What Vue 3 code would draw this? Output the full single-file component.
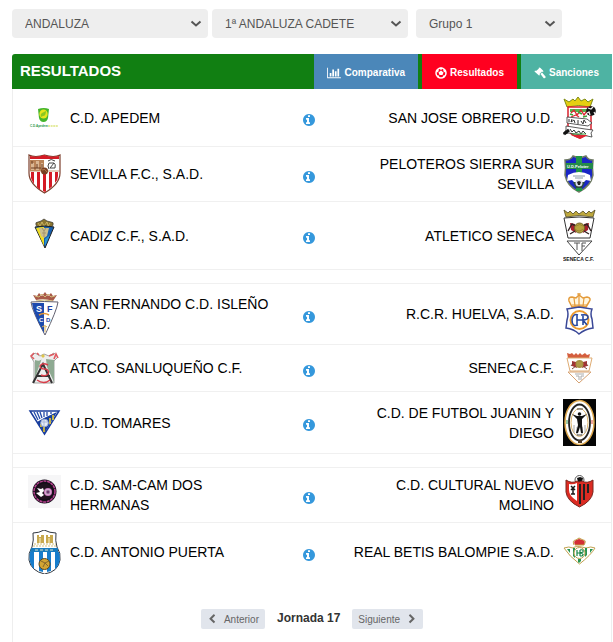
<script setup>
import { ref } from 'vue'

const region = ref('ANDALUZA')
const category = ref('1ª ANDALUZA CADETE')
const group = ref('Grupo 1')

// Club crests, drawn on a 33-unit wide canvas.
const crests = {
  apedem: `
    <path d="M10 13q6-2 11 0l-1 9q-1 4-4.5 4t-4.5-4z" fill="#43b52c"/>
    <ellipse cx="15.5" cy="18" rx="4.2" ry="4.5" fill="#e6e51c"/>
    <path d="M13 21q-1-3 1-4l4-2q0 5-3 5z" fill="#8cc820"/>
    <text x="2" y="31" font-size="3" fill="#259746">C.D.Apedem</text>
    <path d="M20 30h10" stroke="#dce580" stroke-width="1.5" stroke-dasharray="2 .6"/>`,
  obrero: `
    <path d="M4 11L1 3l5 3 4-3 2 2 3-4 3 4 4-2 3 3 5-3-3 8q-11-3-23 0z" fill="#e6cf12" stroke="#7d8b18"/>
    <path d="M5 11h23v23q-2 4-11 8Q6 38 5 34z" fill="#fff" stroke="#d9202c" stroke-width="1.5"/>
    <path d="M7 13h19v3H7z" fill="#53b24c"/>
    <path d="M8 17l3-3 3 5 4-5 3 5 3-4M8 21l5-2 3 2" stroke="#df2835" fill="none" stroke-width="1.3"/>
    <path d="M7 18l3 1m5-3l4 2m1 3l4-1" stroke="#39a33a" stroke-width="1.5"/>
    <path d="M4 21l20 2 5 4-4 3L4 27z" fill="#fff" stroke="#333" stroke-width=".8"/>
    <path d="M6 23v3m3-3l-1 3 3-2 1 3m3-3v4m3-3l2 3 1-4 2 3" stroke="#333" fill="none"/>
    <path d="M3 30l19 3 8 1-2 3 1 4-5-1-18-3-6 1 3-4z" fill="#fff" stroke="#333" stroke-width=".8"/>
    <path d="M7 33l2 3 2-2 2 3 3-2 2 3 2-3 3 3" stroke="#333" fill="none"/>
    <path d="M8 39h17l-8 4z" fill="#df2532"/><path d="M9 38h14" stroke="#3b9a38"/>
    <circle cx="28" cy="15" r="4.8" fill="#111"/>
    <path d="M25 12l3 1 2-2M24 17l2-1 1 3M31 16l1 2" stroke="#eee" fill="none" stroke-width="1.3"/>
    <path d="M1 38l5-4" stroke="#111" stroke-width="3"/>`,
  sevilla: `
    <path d="M1 1q6 3 15.500 0Q26 4 32 1v18q0 11-15.500 20Q1 30 1 19z" fill="#fff" stroke="#7c3f2c" stroke-width="1.2"/>
    <path d="M2 2q7 2 14-1 7 3 15 1v3H2z" fill="#d41b25"/>
    <path d="M2 6h14v11H2z" fill="#b98357"/>
    <path d="M3 9h3v7H3zm5-2h3v9H8zm5 2h2v7h-2z" fill="#dbb792"/>
    <path d="M4 7v3m5 0v4m5-4v5M3 14h10" stroke="#6b3c22"/>
    <path d="M20 7q3-3 7 0m-6 2h5l-4 5h5q1-4-1-5m-5 0q-2 3 0 6" stroke="#444" fill="none"/>
    <path d="M2 17h29" stroke="#c49a72"/>
    <path d="M3 18v6q1 3 3 6V18zm6 0v15q2 2 3 2.500V18zm6 2v17l2 1 1-.6V20zm6-2v17l3-2.500V18zm6 0v11q3-3 3-7v-4z" fill="#d41b25"/>
    <circle cx="16.5" cy="17" r="3.5" fill="#784024"/><path d="M14 16q3-2 5 2" stroke="#c08a5b" fill="none" stroke-width=".8"/>`,
  peloteros: `
    <path d="M2 6q6 0 8-4 6 3 13 0 2 4 7 4-1 8 0 15-2 11-14 17Q4 32 2 21q1-7 0-15z" fill="#1926c5" stroke="#6f7b64" stroke-width="1.5"/>
    <path d="M13 2h6v35h-6z" fill="#219647"/><path d="M3 9h27v6H3z" fill="#248a4a"/>
    <text x="4" y="14" font-size="4" fill="#fff">U.D.Peloter</text>
    <path d="M5 21q11-6 22 0l1 6-5-1-2 2H11l-2-2-5 1z" fill="#fff"/>
    <path d="M10 22h12M12 24h8" stroke="#8698a6"/>
    <path d="M10 28h12l-3 6h-6z" fill="#2f4c3e"/>
    <circle cx="16" cy="29" r="3.5" fill="#dde"/>
    <path d="M14 28l2-1 2 1-1 3h-2z" fill="#222"/>`,
  cadiz: `
    <path d="M8 16q-1-3 2-3l3-1 3-2 3 2 4 1q3 0 2 3l-2 3H10z" fill="#8a7430" stroke="#3a3a35" stroke-width=".7"/>
    <path d="M10 14l2 3 2-4 2 4 3-4 1 4 2-3" stroke="#e3cf78" fill="none" stroke-width=".7"/>
    <path d="M7 18q10-2 19 0l-9 21z" fill="#165fae" stroke="#222"/>
    <path d="M8 19l8 18V18q-4 0-8 1z" fill="#f3df20"/>
    <path d="M11 19h10l-2 8-3 2-3-2z" fill="#ccc08d"/>
    <path d="M14 19l2 3 2-3m-4 5h4m-2-2v6" stroke="#a39470" fill="none"/>
    <path d="M17 30v7l5-11z" fill="#2995d2"/>`,
  atseneca: `
    <path d="M3 8L1 1l4 3 2-2 3 3 3-3 3 3 4-3 3 3 3-3 2 2 4-3-2 7Q16 5 3 8z" fill="#bea83d" stroke="#504921" stroke-width=".8"/>
    <path d="M1 9q15-2 30 0l-4 20H5z" fill="#fff" stroke="#333"/>
    <path d="M7 14l5 1 1 9-5-3zM26 14l-5 1-1 9 5-3z" fill="#a8202d"/>
    <path d="M5 22l4-7 4 2M28 22l-4-7-4 2M7 25l5-3M26 25l-5-3" stroke="#332223" stroke-width="1.4" fill="none"/>
    <circle cx="16.5" cy="19" r="5" fill="#b8a43d" stroke="#75662c"/>
    <path d="M13 17q4-3 7 0m-8 3q4 4 8 0" stroke="#8a782f" fill="none" stroke-width=".7"/>
    <path d="M4 32h25L16 46z" fill="#fff" stroke="#444"/>
    <path d="M11 34h6m-3 0v7m9-7h-4v8m0-5h3" stroke="#555" fill="none"/>
    <text x="0" y="52" font-size="5" fill="#111">SENECA C.F.</text>`,
  sanfernando: `
    <path d="M8 9L5 4l4 1 2-3 3 3 3-4 3 4 3-3 2 3 4-1-4 6q-8-3-17-1z" fill="#a85a48"/>
    <path d="M7 5l4 1 3-3 3 3 3-3 3 3 4-1M8 10q8-2 17 0" stroke="#d0bb79" fill="none"/>
    <path d="M3 11q13-1 27 0-1 8-13 33Q4 20 3 11z" fill="#fff" stroke="#626170"/>
    <path d="M4 12h12v30Q5 22 4 12z" fill="#1d4aae"/>
    <text x="8" y="21" font-size="9" fill="#fff">S</text><text x="19" y="21" font-size="9" fill="#1d3fa4">F</text>
    <path d="M11 24q5-3 10 0" stroke="#e59534" fill="none" stroke-width="1.5"/>
    <text x="11" y="31" font-size="6" fill="#fff">C</text><text x="18" y="31" font-size="6" fill="#1d3fa4">D</text>
    <path d="M14 36q3-3 5 0m-2-1v6" stroke="#d8aa54" fill="none"/>`,
  huelva: `
    <path d="M9 16L6 10q-1-4 3-4l4 1 3-3 4 3 4-1q5 1 2 5l-3 5q-7-2-14 0z" fill="#fff6df" stroke="#e49b3b" stroke-width="1.5"/>
    <path d="M16 2v13m-2-12h4M11 7l1 8m9-8l-1 8M9 14h15" stroke="#e49b3b" stroke-width="1.200"/>
    <path d="M4 18l12-2 13 2q-2 5 0 10l1 9q-8 1-14 6-5-5-13-6l1-8q2-6 0-11z" fill="#fff" stroke="#394797" stroke-width="1.5"/>
    <circle cx="16.5" cy="29" r="9" fill="#fff" stroke="#ed9b2e" stroke-width="2"/>
    <path d="M15 24q-5-2-6 5 0 7 6 5M14 24v10m0-5h6m0-5v10m-2-10q7-1 7 2t-5 3l4 5" stroke="#2949a0" fill="none" stroke-width="1.6"/>`,
  sanluqueno: `
    <path d="M3 5l4-4 5 3 4-2 5 2 5-3 4 4-4 4v22H6V10z" fill="#eee" stroke="#a2a4a1"/>
    <path d="M7 8q6 2 7-2L7 26zM18 7l8 1v22l-7-15z" fill="#8eaa92"/>
    <path d="M6 1L3 4l3 3m3-6l2 2m10 1l5-2m0 5l2-5 2 4" stroke="#e05a61" fill="none" stroke-width="1.6"/>
    <path d="M13 4l2-2 2 2-2 2z" fill="#ddc54d"/>
    <path d="M5 31l10-19 9 19M9 24h13" stroke="#333" fill="none" stroke-width="2"/>
    <path d="M20 13q-6-3-8 1 0 3 5 3 5 1 3 5-3 3-7 1M9 28q7 5 13 0" stroke="#d83d49" fill="none" stroke-width="1.4"/>`,
  seneca: `
    <path d="M5 6L4 1l3 1 2-1 2 2 2-2 2 2 2-2 2 2 3-2 2 2 3-1-1 4z" fill="#d45e3e"/>
    <path d="M4 6h25l-3 13H7z" fill="#fff" stroke="#dfac73"/>
    <path d="M9 9l4 1 1 6-5-2zm15 0l-4 1-1 6 5-2z" fill="#a83034"/>
    <path d="M8 14l3-4m14 4l-3-4M9 17l4-3m11 3l-4-3" stroke="#7b4a3c"/>
    <circle cx="16.5" cy="12" r="4" fill="#a69243"/><path d="M14 11h5m-5 2h5" stroke="#c5ae55" stroke-width=".6"/>
    <path d="M5 20h23L16 31z" fill="#fff" stroke="#d6a171"/>
    <path d="M12 22h9M13 24h3v4m5-4h-3v4" stroke="#aaa" fill="none"/>`,
  tomares: `
    <path d="M2 12h29L16.500 35z" fill="#fff" stroke="#193c9c" stroke-width="1.5"/>
    <path d="M9 23l7-4 13-6-12.500 21z" fill="#173f9f"/>
    <path d="M13 25v3m3-3v8m6-14v6m3-9v5" stroke="#edce30" stroke-width="1.6"/>
    <path d="M6 13l4 8m-1-8l3 7m0-7l2 6m2-6v5m3-5v4m4-4v2" stroke="#244ba9" fill="none" stroke-width="1.3"/>
    <circle cx="16.5" cy="24" r="3.8" fill="#e8eef6" stroke="#8fa2cd"/><path d="M14 23h5m-3-2v6" stroke="#a8b7da"/>`,
  juanin: `
    <path d="M0 0h33v47H0z" fill="#050505"/>
    <ellipse cx="16.5" cy="23.5" rx="14.500" ry="22" fill="#fff" stroke="#dfa84c" stroke-width="1.5"/>
    <ellipse cx="16.5" cy="23.5" rx="10.500" ry="18" fill="#fff" stroke="#222" stroke-width="1.8"/>
    <ellipse cx="16.5" cy="23.5" rx="8.500" ry="14" fill="#fff" stroke="#ddb56b"/>
    <path d="M11 26v8m3-6v8m5-8v8m3-10v8" stroke="#aaa"/>
    <path d="M9 15l5 2h5l5-2-5 5v6l1 8h-2l-1-6-2 6h-2l2-8-1-6z" fill="#111"/><circle cx="16.5" cy="15" r="1.800" fill="#111"/>
    <path d="M14 10h6M14 36h5" stroke="#444"/><path d="M15 41h4v3h-4z" fill="#4b3827"/>
    <path d="M3 22h2m-2 2h2" stroke="#379954"/><path d="M28 22h2m-2 2h2" stroke="#dd453c"/>`,
  samcam: `
    <path d="M0 0h33v33H0z" fill="#f6f6f7"/><circle cx="16.5" cy="16.5" r="12" fill="#150e19"/>
    <circle cx="16.5" cy="16.5" r="10.5" fill="none" stroke="#b5418f" stroke-width="1.5" stroke-dasharray="3 .7"/>
    <circle cx="16.5" cy="16.5" r="8" fill="#20121f"/>
    <path d="M9 13l4 1 2-1 1 3-2 2 2 2-3 2-5-4 4-1z" fill="#fff"/>
    <circle cx="20" cy="17" r="4" fill="#c87bbd"/><path d="M18 15h4v4h-4z" fill="#6d3970" stroke="#fff" stroke-width=".6"/>`,
  molino: `
    <circle cx="16.5" cy="5" r="4.500" fill="#fff" stroke="#555"/><path d="M14 3l3-1 3 1-1 4h-4z" fill="#111"/>
    <path d="M3 5q6 4 11 1l2 1 3-1q5 3 11-1v12q-1 9-13.500 15Q4 26 3 17z" fill="#dc2b22" stroke="#78261e"/>
    <path d="M6 9q4 1 8-1v18Q6 21 6 15z" fill="#fff"/>
    <path d="M8 11l4 4m0-4l-4 4m2-1v5m-2 0h4" stroke="#191919" fill="none" stroke-width="1.5"/>
    <path d="M17 9v20M21 9v16M25 9v9" stroke="#222" stroke-width="2"/>`,
  puerta: `
    <path d="M5 3q6 0 11-3 6 3 12 3-1 8 1 14 4 6 3 13-2 12-15.500 14Q3 41 1 30q-1-7 3-13Q6 10 5 3z" fill="#fff" stroke="#333942"/>
    <path d="M9 5h2v2h2V5h3v8H9zM18 5h2v2h2V5h3v8h-7z" fill="#c8a94f"/><path d="M12 8v5m9-5v5" stroke="#fff6ca"/>
    <path d="M6 14h22M5 16h23" stroke="#d3bf7d" stroke-dasharray="2 1"/>
    <path d="M3 18h27v4H2z" fill="#187bbd"/><path d="M7 20h20" stroke="#d9e4cc" stroke-dasharray="3 2"/>
    <path d="M2 22h4v17q-6-6-4-17zm9 0h4v20l-4-1zm8 0h4v19l-4 1zm8 0h4q3 11-4 17z" fill="#177dcc"/>
    <circle cx="16.5" cy="34" r="5.500" fill="#d3a533" stroke="#5d4821"/>
    <path d="M13 31l4 2 4-2m-4 2l-2 4m2-4l3 3" stroke="#7c6029" fill="none" stroke-width=".9"/>`,
  betis: `
    <path d="M12 15q-2-4 1-5l3-1 4 1q3 1 1 5z" fill="#d32e35"/>
    <path d="M11 15q-2-5 2-5l3-2 4 2q4 0 1 5H12" stroke="#c09b40" fill="none"/>
    <path d="M1 18q5-2 9 0 3-3 13 0 5-2 9 0-4 7-15.500 16Q6 26 1 18z" fill="#fff" stroke="#c2a250"/>
    <path d="M4 19l3 4v-4zm6-1v8l2 2V18zm5 11v3l1 1 2-2v-2zm7-11v9l2-2v-7zm5 1v4l3-4z" fill="#259451"/>
    <circle cx="16.5" cy="23" r="5.500" fill="#fff" stroke="#ba9f4d"/>
    <path d="M14 20v6m0-3h4m-1-3v6m0-6q4-1 3 2l-3 1q5 1 2 3h-2" stroke="#178544" fill="none" stroke-width="1.2"/>`
}

const blocks = [
  [
    { home: 'C.D. APEDEM', homeCrest: 'apedem', hh: 33, away: 'SAN JOSE OBRERO U.D.', awayCrest: 'obrero', ah: 43 },
    { home: 'SEVILLA F.C., S.A.D.', homeCrest: 'sevilla', hh: 40, away: 'PELOTEROS SIERRA SUR SEVILLA', awayCrest: 'peloteros', ah: 40 },
    { home: 'CADIZ C.F., S.A.D.', homeCrest: 'cadiz', hh: 53, away: 'ATLETICO SENECA', awayCrest: 'atseneca', ah: 53 }
  ],
  [
    { home: 'SAN FERNANDO C.D. ISLEÑO S.A.D.', homeCrest: 'sanfernando', hh: 46, away: 'R.C.R. HUELVA, S.A.D.', awayCrest: 'huelva', ah: 46 },
    { home: 'ATCO. SANLUQUEÑO C.F.', homeCrest: 'sanluqueno', hh: 32, away: 'SENECA C.F.', awayCrest: 'seneca', ah: 32 },
    { home: 'U.D. TOMARES', homeCrest: 'tomares', hh: 47, away: 'C.D. DE FUTBOL JUANIN Y DIEGO', awayCrest: 'juanin', ah: 47 }
  ],
  [
    { home: 'C.D. SAM-CAM DOS HERMANAS', homeCrest: 'samcam', hh: 33, away: 'C.D. CULTURAL NUEVO MOLINO', awayCrest: 'molino', ah: 33 },
    { home: 'C.D. ANTONIO PUERTA', homeCrest: 'puerta', hh: 44, away: 'REAL BETIS BALOMPIE S.A.D.', awayCrest: 'betis', ah: 44 }
  ]
]
</script>

<template>
  <main class="page">
    <form class="filters">
      <label class="picker">
        <select v-model="region" aria-label="Territorial"><option>ANDALUZA</option></select>
        <svg viewBox="0 0 12 8" aria-hidden="true"><path d="M1.500 1.500L6 5.500l4.500-4" /></svg>
      </label>
      <label class="picker">
        <select v-model="category" aria-label="Categoría"><option>1ª ANDALUZA CADETE</option></select>
        <svg viewBox="0 0 12 8" aria-hidden="true"><path d="M1.500 1.500L6 5.500l4.500-4" /></svg>
      </label>
      <label class="picker picker-group">
        <select v-model="group" aria-label="Grupo"><option>Grupo 1</option></select>
        <svg viewBox="0 0 12 8" aria-hidden="true"><path d="M1.500 1.500L6 5.500l4.500-4" /></svg>
      </label>
    </form>

    <section class="panel">
      <header class="panel-head">
        <h1>RESULTADOS</h1>
        <nav class="tabs">
          <a href="#comparativa" class="tab tab-compare">
            <svg width="14" height="12" viewBox="0 0 2048 1792" aria-hidden="true"><path fill="currentColor" d="M640 896v512h-256v-512h256zm384-512v1024h-256v-1024h256zm1024 1152v128h-2048v-1536h128v1408h1920zm-640-896v768h-256v-768h256zm384-384v1152h-256v-1152h256z" /></svg>
            Comparativa
          </a>
          <a href="#resultados" class="tab tab-results">
            <svg width="12" height="12" viewBox="0 0 24 24" aria-hidden="true"><circle cx="12" cy="12" r="10" fill="none" stroke="currentColor" stroke-width="3" /><path fill="currentColor" d="M12 7l5 4-2 5H9l-2-5zM7 2l5 4 5-4-5-1zM2 8l4 3 2-6-4 0zM22 8l-4 3-2-6 4 0zM3 17l5 0 1 6-4-2zM21 17l-5 0-1 6 4-2z" /></svg>
            Resultados
          </a>
          <a href="#sanciones" class="tab tab-sanctions">
            <svg width="12" height="12" viewBox="0 0 24 24" aria-hidden="true"><path fill="currentColor" d="M11 1l2 1 5 5 1 2-2 1-1-1-5 5 1 2-2 1-9-8 1-2 2 1 6-5-1-1zM13 14l3-3 7 8q1 2-1 3t-3 0z" /></svg>
            Sanciones
          </a>
        </nav>
      </header>

      <table class="matches">
        <colgroup>
          <col class="col-home-crest"><col><col class="col-info"><col><col class="col-away-crest">
        </colgroup>
        <tbody v-for="(block, b) in blocks" :key="b">
          <tr v-if="b > 0" class="gap"><td colspan="5"></td></tr>
          <tr v-for="m in block" :key="m.home" class="match">
            <td class="crest home-crest"><svg width="33" :height="m.hh" aria-hidden="true" v-html="crests[m.homeCrest]"></svg></td>
            <td class="team home">{{ m.home }}</td>
            <td class="info">
              <a href="#partido" aria-label="Información del partido">
                <svg width="14" height="14" viewBox="0 0 1792 1792" aria-hidden="true"><path fill="currentColor" d="M1024 1376v-160q0-14-9-23t-23-9h-96v-512q0-14-9-23t-23-9h-320q-14 0-23 9t-9 23v160q0 14 9 23t23 9h96v320h-96q-14 0-23 9t-9 23v160q0 14 9 23t23 9h448q14 0 23-9t9-23zM1024 480v-160q0-14-9-23t-23-9h-192q-14 0-23 9t-9 23v160q0 14 9 23t23 9h192q14 0 23-9t9-23zM1664 896q0 209-103 385.500t-279.500 279.500-385.500 103-385.500-103-279.500-279.500-103-385.500 103-385.500 279.500-279.500 385.500-103 385.500 103 279.500 279.500 103 385.500z" transform="translate(0 0)" /></svg>
              </a>
            </td>
            <td class="team away">{{ m.away }}</td>
            <td class="crest away-crest"><svg width="33" :height="m.ah" aria-hidden="true" v-html="crests[m.awayCrest]"></svg></td>
          </tr>
        </tbody>
      </table>

      <footer class="pager">
        <button type="button">
          <svg width="10" height="10" viewBox="0 0 1792 1792" aria-hidden="true"><path fill="currentColor" d="M1427 301l-531 531 531 531q19 19 19 45t-19 45l-166 166q-19 19-45 19t-45-19l-742-742q-19-19-19-45t19-45l742-742q19-19 45-19t45 19l166 166q19 19 19 45t-19 45z" /></svg>
          Anterior
        </button>
        <strong>Jornada 17</strong>
        <button type="button">
          Siguiente
          <svg width="10" height="10" viewBox="0 0 1792 1792" aria-hidden="true"><path fill="currentColor" d="M1363 877l-742 742q-19 19-45 19t-45-19l-166-166q-19-19-19-45t19-45l531-531-531-531q-19-19-19-45t19-45l166-166q19-19 45-19t45 19l742 742q19 19 19 45t-19 45z" /></svg>
        </button>
      </footer>
    </section>
  </main>
</template>

<style>
body {
  background: #fff;
  font-family: "Liberation Sans", Arial, sans-serif;
}
</style>

<style scoped>
.page {
  display: flex;
  flex-direction: column;
  box-sizing: border-box;
  min-height: 100vh;
  padding: 9px 1px 0 12px;
}
.filters {
  display: flex;
  gap: 4px;
  margin-bottom: 16px;
}
.picker {
  position: relative;
  flex: 0 1 196px;
}
.picker-group {
  flex-basis: 146px;
  margin-left: 4px;
}
.picker select {
  display: block;
  width: 100%;
  height: 29px;
  padding: 0 28px 0 13px;
  border: 0;
  border-radius: 4px;
  background: #eee;
  color: #555;
  font: 12px "Liberation Sans", Arial, sans-serif;
  appearance: none;
}
.picker svg {
  position: absolute;
  top: 11px;
  right: 6px;
  width: 12px;
  height: 8px;
  fill: none;
  stroke: #555;
  stroke-width: 2;
  pointer-events: none;
}
.panel {
  display: flex;
  flex: 1;
  flex-direction: column;
}
.panel-head {
  display: flex;
  justify-content: space-between;
  height: 35px;
  padding-left: 8px;
  border-radius: 3px 0 0 0;
  background: #117f12;
  color: #fff;
}
.panel-head h1 {
  margin: 0;
  font-size: 15px;
  line-height: 34px;
}
.tabs {
  display: flex;
  gap: 4px;
}
.tab {
  display: flex;
  align-items: center;
  justify-content: center;
  gap: 3px;
  padding: 2px 13px 0;
  color: #fff;
  font-size: 10px;
  font-weight: bold;
  text-decoration: none;
}
.tab-compare {
  background: #4b87b9;
}
.tab-results {
  background: #ff0020;
}
.tab-sanctions {
  background: #4eb3a3;
}
.matches {
  width: 100%;
  table-layout: fixed;
  border-spacing: 0;
  border: solid #eee;
  border-width: 0 1px;
}
.col-home-crest {
  width: 51px;
}
.col-info {
  width: 60px;
}
.col-away-crest {
  width: 53px;
}
.matches td {
  padding: 7px 0;
  border-bottom: 1px solid #f0f0f0;
}
.matches tbody:last-child tr:last-child td {
  border-bottom: 0;
}
.matches .gap td {
  height: 13px;
  padding: 0;
}
.crest {
  vertical-align: top;
}
.crest svg {
  display: block;
  font-family: "Liberation Sans", Arial, sans-serif;
  font-weight: bold;
}
.matches .home-crest {
  padding-left: 15px;
}
.matches .away-crest {
  padding-left: 5px;
}
.team {
  color: #000;
  font-size: 14px;
  line-height: 20px;
}
.matches .home {
  padding-left: 6px;
}
.matches .away {
  padding-right: 4px;
  text-align: right;
}
.matches .info {
  padding: 5px 4px 0 0;
  text-align: center;
}
.info a {
  color: #3598dc;
}
.info svg {
  display: block;
  margin: 0 auto;
}
.pager {
  display: flex;
  flex: 1;
  align-items: flex-start;
  justify-content: center;
  gap: 12px;
  padding-top: 28px;
  border: solid #eee;
  border-width: 0 1px;
  color: #333;
  font-size: 12px;
  line-height: 18px;
}
.pager button {
  display: flex;
  align-items: center;
  gap: 7px;
  height: 20px;
  padding: 0 6px;
  border: 0;
  border-radius: 2px;
  background: #e1e5ec;
  color: #666;
  font: 10px "Liberation Sans", Arial, sans-serif;
}
</style>
